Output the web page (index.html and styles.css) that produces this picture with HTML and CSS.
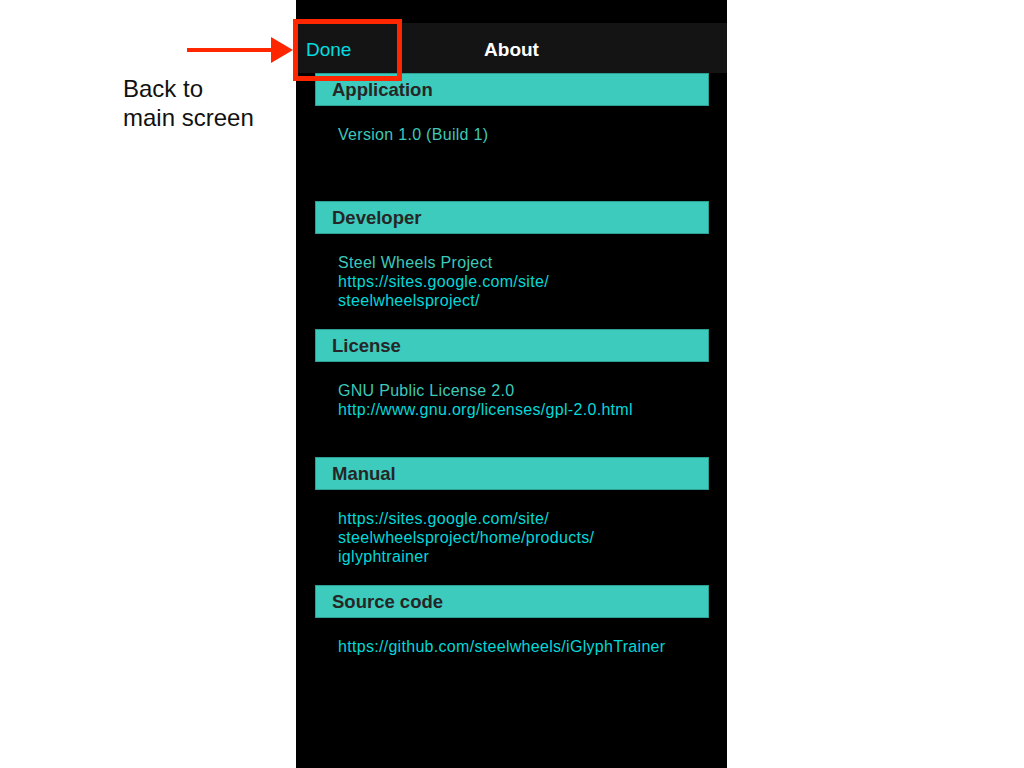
FILE: index.html
```html
<!DOCTYPE html>
<html lang="en">
<head>
<meta charset="utf-8">
<title>About</title>
<link rel="stylesheet" href="styles.css">
</head>
<body>
<div class="page">
  <aside class="note">
    <p>Back to<br>main screen</p>
  </aside>
  <main class="phone">
    <header class="navbar">
      <span class="done">Done</span>
      <h1 class="title">About</h1>
      <span></span>
    </header>
    <section class="group">
      <h2 class="group-head">Application</h2>
      <div class="group-body">
        <p class="plain">Version 1.0 (Build 1)</p>
      </div>
    </section>
    <section class="group">
      <h2 class="group-head">Developer</h2>
      <div class="group-body">
        <p class="plain">Steel Wheels Project</p>
        <p class="link">https://sites.google.com/site/<br>steelwheelsproject/</p>
      </div>
    </section>
    <section class="group">
      <h2 class="group-head">License</h2>
      <div class="group-body">
        <p class="plain">GNU Public License 2.0</p>
        <p class="link">http://www.gnu.org/licenses/gpl-2.0.html</p>
      </div>
    </section>
    <section class="group">
      <h2 class="group-head">Manual</h2>
      <div class="group-body">
        <p class="link">https://sites.google.com/site/<br>steelwheelsproject/home/products/<br>iglyphtrainer</p>
      </div>
    </section>
    <section class="group">
      <h2 class="group-head">Source code</h2>
      <div class="group-body">
        <p class="link">https://github.com/steelwheels/iGlyphTrainer</p>
      </div>
    </section>
  </main>
  <div class="callout-arrow"><span class="arrow-line"></span><span class="arrow-head"></span></div>
  <div class="callout-box"></div>
</div>
</body>
</html>
```

FILE: styles.css
```css
* { box-sizing: border-box; }
html, body { margin: 0; padding: 0; background: #ffffff; }
body { font-family: "Liberation Sans", Arial, Helvetica, sans-serif; }

.page {
  position: relative;
  display: flex;
  min-height: 768px;
}

.note {
  width: 296px;
  flex: none;
  padding: 74px 0 0 123px;
}
.note p {
  margin: 0;
  font-size: 24px;
  line-height: 29px;
  color: #111111;
}

.phone {
  width: 431px;
  flex: none;
  min-height: 768px;
  background: #000000;
  padding-top: 23px;
}

.navbar {
  height: 50px;
  padding-top: 3px;
  background: #141414;
  display: grid;
  grid-template-columns: 1fr auto 1fr;
  align-items: center;
}
.done {
  padding-left: 10px;
  font-size: 19px;
  color: #00dde0;
}
.title {
  margin: 0;
  font-size: 19px;
  font-weight: bold;
  color: #ffffff;
}

.group {
  height: 128px;
  padding: 0 18px 0 19px;
}
.group-head {
  margin: 0;
  height: 33px;
  border: 1px solid #2b9f94;
  background: #3ccbbd;
  padding: 1px 0 0 16px;
  font-size: 18.5px;
  line-height: 30px;
  font-weight: bold;
  color: #262626;
}
.group-body {
  padding: 19px 0 0 23px;
}
.group-body p {
  margin: 0;
  font-size: 16px;
  line-height: 19px;
  letter-spacing: 0.3px;
}
.plain { color: #3cc9ba; }
.link { color: #00d8da; }

.callout-arrow {
  position: absolute;
  left: 187px;
  top: 37px;
  width: 106px;
  height: 26px;
  display: flex;
  align-items: center;
}
.arrow-line {
  width: 84px;
  height: 4px;
  background: #ff2600;
}
.arrow-head {
  width: 0;
  height: 0;
  border-top: 13px solid transparent;
  border-bottom: 13px solid transparent;
  border-left: 22px solid #ff2600;
}
.callout-box {
  position: absolute;
  left: 293px;
  top: 19px;
  width: 109px;
  height: 62px;
  border: 5px solid #ff2600;
}
```
